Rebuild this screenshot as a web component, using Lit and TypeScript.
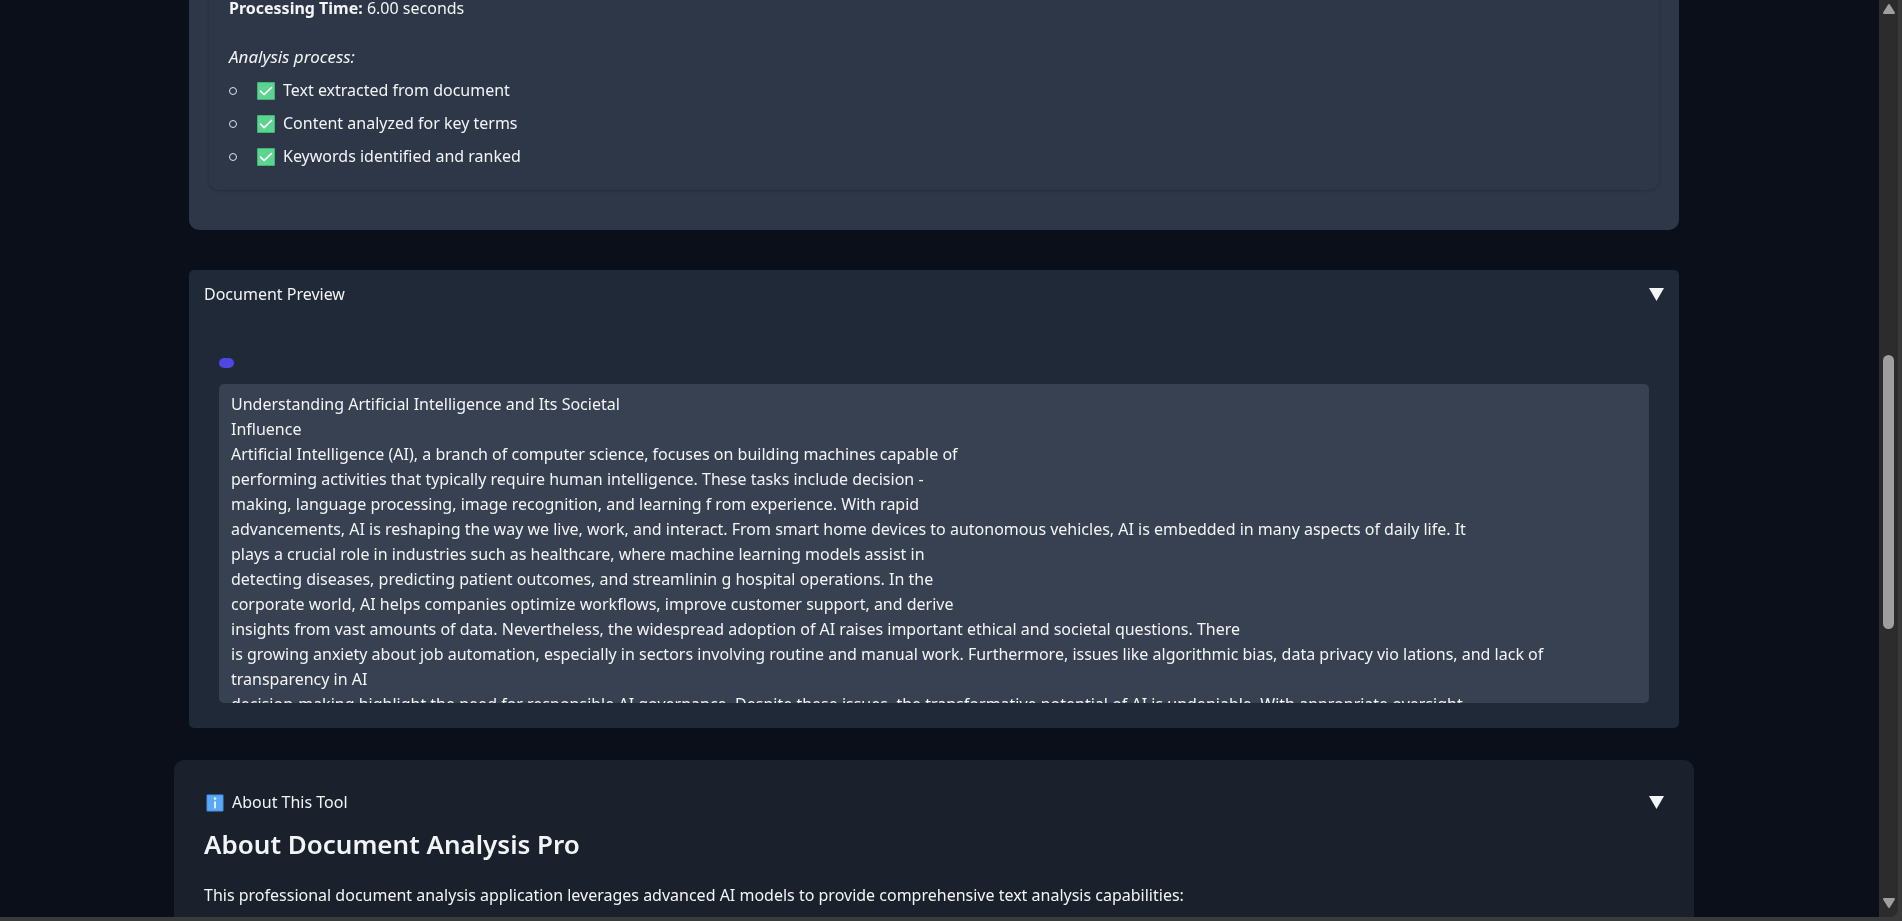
import { LitElement, css, html } from "lit";
import { customElement } from "lit/decorators.js";

const steps = [
  "Text extracted from document",
  "Content analyzed for key terms",
  "Keywords identified and ranked",
];

const documentText = [
  "Understanding Artificial Intelligence and Its Societal",
  "Influence",
  "Artificial Intelligence (AI), a branch of computer science, focuses on building machines capable of",
  "performing activities that typically require human intelligence. These tasks include decision -",
  "making, language processing, image recognition, and learning f rom experience. With rapid",
  "advancements, AI is reshaping the way we live, work, and interact. From smart home devices to autonomous vehicles, AI is embedded in many aspects of daily life. It",
  "plays a crucial role in industries such as healthcare, where machine learning models assist in",
  "detecting diseases, predicting patient outcomes, and streamlinin g hospital operations. In the",
  "corporate world, AI helps companies optimize workflows, improve customer support, and derive",
  "insights from vast amounts of data. Nevertheless, the widespread adoption of AI raises important ethical and societal questions. There",
  "is growing anxiety about job automation, especially in sectors involving routine and manual work. Furthermore, issues like algorithmic bias, data privacy vio lations, and lack of transparency in AI",
  "decision-making highlight the need for responsible AI governance. Despite these issues, the transformative potential of AI is undeniable. With appropriate oversight",
].join("\n");

const checkIcon = html`<svg class="icon" viewBox="0 0 18 18" aria-hidden="true">
  <rect width="18" height="18" rx="1" fill="#45b377" />
  <rect x="1" y="1" width="16" height="16" fill="#5ad48e" />
  <path d="M3.6 9.2l3.5 3.5 7.4-7.2" fill="none" stroke="#fff" stroke-width="1.7" stroke-linecap="round" stroke-linejoin="round" />
</svg>`;

const infoIcon = html`<svg class="icon info" viewBox="0 0 18 18" aria-hidden="true">
  <rect x="0.5" y="0.5" width="17" height="17" rx="1" fill="#4a90e2" />
  <rect x="1.5" y="1.5" width="15" height="15" fill="#5aa9f8" />
  <circle cx="9" cy="4.6" r="1.3" fill="#e4f0ff" />
  <rect x="8" y="7.2" width="2" height="7.3" rx="0.8" fill="#e4f0ff" />
</svg>`;

const arrow = html`<svg class="arrow" viewBox="0 0 15 13" aria-hidden="true">
  <path d="M0 0h15L7.5 13z" fill="#f3f4f6" />
</svg>`;

@customElement("page-scrollbar")
class PageScrollbar extends LitElement {
  static styles = css`
    :host {
      display: flex;
      flex-direction: column;
      align-items: center;
      box-sizing: border-box;
      padding: 4px 0 9px;
      background: #2c2c2c;
      border-bottom-right-radius: 8px;
    }
    .end {
      width: 12px;
      height: 10px;
      flex: none;
    }
    .before {
      flex: 341;
    }
    .thumb {
      flex: 274;
      width: 11px;
      border-radius: 6px;
      background: #9f9f9f;
    }
    .after {
      flex: 269;
    }
  `;

  render() {
    return html`
      <svg class="end" viewBox="0 0 12 10"><path d="M6 1L11 9H1z" fill="#9f9f9f" stroke="#9f9f9f" stroke-width="2" stroke-linejoin="round" /></svg>
      <div class="before"></div>
      <div class="thumb"></div>
      <div class="after"></div>
      <svg class="end" viewBox="0 0 12 10"><path d="M6 9L11 1H1z" fill="#9f9f9f" stroke="#9f9f9f" stroke-width="2" stroke-linejoin="round" /></svg>
    `;
  }
}

@customElement("app-root")
class AppRoot extends LitElement {
  static styles = css`
    :host {
      display: grid;
      grid-template-columns: minmax(0, 1fr) 19px;
      box-sizing: border-box;
      height: 100vh;
      overflow: hidden;
      border: 0 solid #3a3a3a;
      border-width: 0 4px 4px 0;
      background: #3a3a3a;
      color: #f3f4f6;
      font-family: "Noto Sans", sans-serif;
      font-size: 16px;
      line-height: 25px;
    }
    .page {
      overflow: hidden;
      padding-right: 11px;
      background: #0b0f19;
    }
    .container {
      max-width: 1520px;
      margin: 0 auto;
    }
    .results {
      margin: -24px 15px 0;
      padding: 0 20px 40px;
      border-radius: 0 0 10px 10px;
      background: #2d3748;
    }
    .panel {
      padding: 20px 20px 17px;
      border-radius: 0 0 10px 10px;
      box-shadow: 0 1px 3px rgba(0, 0, 0, 0.2);
    }
    .line {
      margin: 0 0 23px;
    }
    .note {
      margin: 0 0 5px;
      font-size: 17px;
    }
    .steps {
      margin: 0;
      padding: 0;
      list-style: none;
    }
    .step {
      display: flex;
      align-items: center;
      gap: 8px;
      line-height: 33px;
    }
    .step::before {
      content: "";
      box-sizing: border-box;
      width: 8px;
      height: 8px;
      margin-right: 12px;
      border: 1px solid #e2e4e8;
      border-radius: 50%;
    }
    .icon {
      flex: none;
      width: 18px;
      height: 18px;
    }
    .info {
      margin-left: 2px;
    }
    .preview {
      margin: 40px 15px 32px;
      padding: 12px 15px 25px;
      border-radius: 5px;
      background: #1f2937;
    }
    .bar {
      display: flex;
      align-items: center;
      justify-content: space-between;
      list-style: none;
      cursor: pointer;
    }
    .bar::-webkit-details-marker {
      display: none;
    }
    .title {
      display: flex;
      align-items: center;
      gap: 8px;
    }
    .arrow {
      width: 15px;
      height: 13px;
    }
    .body {
      padding: 51px 15px 0;
    }
    .tag {
      width: 15px;
      height: 10px;
      margin-bottom: 16px;
      border-radius: 5px;
      background: #4f46e5;
    }
    .text {
      box-sizing: border-box;
      max-height: 319px;
      padding: 8px 12px;
      overflow-y: auto;
      scrollbar-width: none;
      border-radius: 5px;
      background: #374151;
      white-space: pre-wrap;
    }
    .about {
      padding: 30px;
      border-radius: 10px;
      background: #1a202c;
    }
    .heading {
      margin: 13px 0 23px;
      font-size: 26px;
      line-height: 32px;
      font-weight: 600;
    }
    .intro {
      margin: 0;
    }
  `;

  render() {
    return html`
      <main class="page">
        <div class="container">
          <section class="results">
            <div class="panel">
              <p class="line"><strong>Processing Time:</strong> 6.00 seconds</p>
              <p class="note"><em>Analysis process:</em></p>
              <ul class="steps">
                ${steps.map((s) => html`<li class="step">${checkIcon}<span>${s}</span></li>`)}
              </ul>
            </div>
          </section>

          <details class="preview" open>
            <summary class="bar"><span class="title">Document Preview</span>${arrow}</summary>
            <div class="body">
              <div class="tag"></div>
              <div class="text">${documentText}</div>
            </div>
          </details>

          <details class="about" open>
            <summary class="bar"><span class="title">${infoIcon}About This Tool</span>${arrow}</summary>
            <h2 class="heading">About Document Analysis Pro</h2>
            <p class="intro">This professional document analysis application leverages advanced AI models to provide comprehensive text analysis capabilities:</p>
          </details>
        </div>
      </main>
      <page-scrollbar></page-scrollbar>
    `;
  }
}
